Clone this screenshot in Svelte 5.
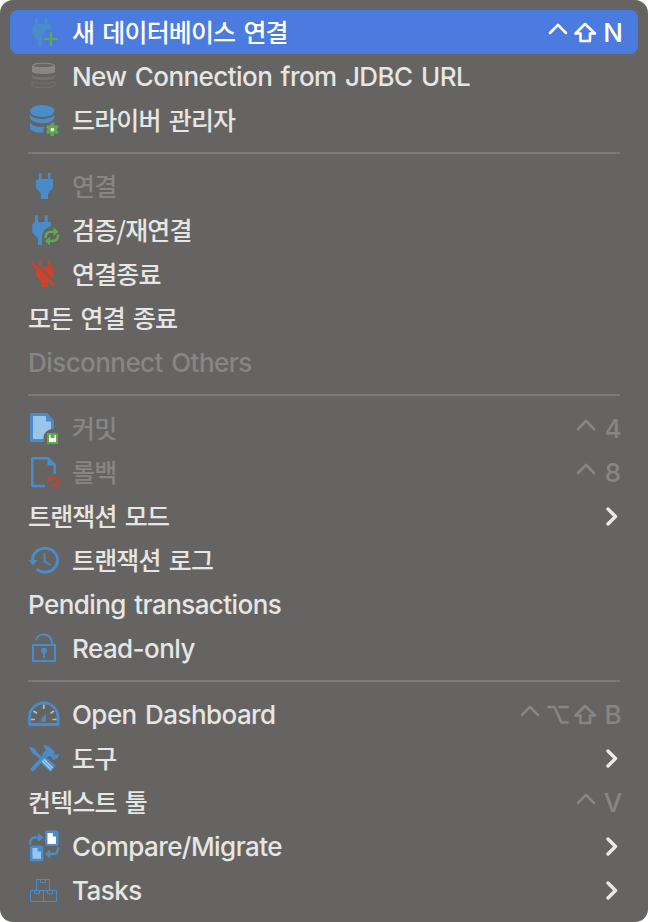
<script lang="ts">
  type Item = {
    label: string;
    icon?: string;
    keys?: string[];
    submenu?: boolean;
    disabled?: boolean;
    active?: boolean;
  };

  const groups: Item[][] = [
    [
      { label: "새 데이터베이스 연결", icon: "plug-add", keys: ["ctrl", "shift", "N"], active: true },
      { label: "New Connection from JDBC URL", icon: "jdbc" },
      { label: "드라이버 관리자", icon: "drivers" },
    ],
    [
      { label: "연결", icon: "plug", disabled: true },
      { label: "검증/재연결", icon: "reconnect" },
      { label: "연결종료", icon: "disconnect" },
      { label: "모든 연결 종료" },
      { label: "Disconnect Others", disabled: true },
    ],
    [
      { label: "커밋", icon: "commit", keys: ["ctrl", "4"], disabled: true },
      { label: "롤백", icon: "rollback", keys: ["ctrl", "8"], disabled: true },
      { label: "트랜잭션 모드", submenu: true },
      { label: "트랜잭션 로그", icon: "history" },
      { label: "Pending transactions" },
      { label: "Read-only", icon: "lock" },
    ],
    [
      { label: "Open Dashboard", icon: "dashboard", keys: ["ctrl", "alt", "shift", "B"] },
      { label: "도구", icon: "tools", submenu: true },
      { label: "컨텍스트 툴", keys: ["ctrl", "V"] },
      { label: "Compare/Migrate", icon: "compare", submenu: true },
      { label: "Tasks", icon: "tasks", submenu: true },
    ],
  ];

  const isKorean = (s: string) => /[가-힣]/.test(s);
</script>

{#snippet bigPlug()}
  <path d="M7 1.3h3V8h6.700V1.300h3V8H23v4.500c-5 1-8.500 4.500-9 10V31h-4v-6.500L4.300 18.500V10.500L7 8z" fill="#4a8cc8" />
{/snippet}

{#snippet glyph(name: string)}
  <svg class="icon" viewBox="0 0 32 32">
    {#if name === "plug-add"}
      {@render bigPlug()}
      <path d="M16 23h14M23 16v14" stroke="#62a84e" stroke-width="2" />
    {:else if name === "jdbc"}
      <path d="M4 6v5.500c0 3.300 23 3.300 23 0V6z" fill="#888786" />
      <ellipse cx="15.500" cy="5.500" rx="11" ry="2.300" fill="#686765" stroke="#929190" />
      <path d="M4 15v2.500c0 3.300 23 3.300 23 0V15c-2 3-21 3-23 0z" fill="#73726f" />
      <path d="M4 21.500c2 2.500 21 2.500 23 0V25c-1 3.700-22 3.700-23 0z" fill="none" stroke="#73726f" />
    {:else if name === "drivers"}
      <g fill="#4b8dca">
        <ellipse cx="14.200" cy="7" rx="12.200" ry="6" />
        <path d="M2 10.500c4 6 20.400 6 24.400 0V14c-3 7-21.400 7-24.400 0z" />
        <path d="M2 18.300c3 4.700 10 5.200 15 4.200-1.500 1.500-1.800 3-1.500 6C9 29.300 2 27.500 2 23.500z" />
        <path d="M21 20.500c3-1 4.500-2 5.400-3v1.500z" />
      </g>
      <circle cx="24.300" cy="25.500" r="5" fill="#62a84e" />
      <path d="M24.300 19v13M18.700 22.200l11.200 6.600M18.700 28.800l11.200-6.600" stroke="#62a84e" stroke-width="3.200" />
      <circle cx="24.300" cy="25.500" r="1.800" fill="#fff" />
    {:else if name === "plug"}
      <path d="M11 3h2.500v6H20V3h2.500v6H25v9l-5 5.500V29h-7v-5.500L8 18v-7.500L11 9z" fill="#4a8cca" />
    {:else if name === "reconnect"}
      {@render bigPlug()}
      <path d="M17.500 24c0-4.500 2.500-6.300 5.500-6.300h4M30 20.800c0 4.500-2.500 6.300-5.500 6.300h-4" fill="none" stroke="#62a84e" stroke-width="2.500" />
      <path d="M25.500 13.300l5 4.400-5 4.200zM22 22.800l-5 4.300 5 4.300z" fill="#62a84e" />
    {:else if name === "disconnect"}
      <path d="M11 3h2.500v6H20V3h2.500v6H25v9l-5 5.500V29h-7v-5.500L8 18v-7.500L11 9z" fill="#cb432b" />
      <path d="M5.500 3.500l24 23" stroke="#656461" stroke-width="1.500" />
      <path d="M3.500 5l23 23" stroke="#cb432b" stroke-width="2.600" />
    {:else if name === "commit"}
      <path d="M3.500 2.500h15l6 6.500v19.500h-21z" fill="#98c5e8" stroke="#4a8cca" stroke-width="3" stroke-linejoin="round" />
      <path d="M18 2v7.500h7.500z" fill="#4a8cca" />
      <circle cx="24.500" cy="26" r="9" fill="#656461" />
      <path d="M19 21h9.500l1.500 1.500V32H19z" fill="#62a84e" />
      <path d="M21 23h1.500v3h4v-3H28v7h-7z" fill="#fff" />
    {:else if name === "rollback"}
      <path d="M17 30H4.300V2.300H20l6.700 6.500V18" fill="none" stroke="#4a8cca" stroke-width="2.600" stroke-linejoin="round" />
      <path d="M19.500 1.500v8H27z" fill="#4a8cca" />
      <path d="M20 23h7c4.500 0 4.500 6.500 0 6.500h-5" fill="none" stroke="#c8432c" stroke-width="2" />
      <path d="M22 20l-4 3 4 3.500z" fill="#c8432c" />
    {:else if name === "history"}
      <path d="M4.500 16a12.500 12 0 1 1 4 9" fill="none" stroke="#4a8cca" stroke-width="3" />
      <path d="M16.500 9v8.500l6 3.500" fill="none" stroke="#4a8cca" stroke-width="1.900" />
      <path d="M.3 16h9.400L5 21z" fill="#4a8cca" />
    {:else if name === "lock"}
      <g fill="none" stroke="#4a8cca" stroke-width="2">
        <path d="M5 13h22v16H5zM8 8.500c1-4.500 4-6 7.500-6 5 0 8.500 3 8.500 10.500M16 19v7" />
      </g>
      <circle cx="16" cy="18.800" r="3" fill="#4a8cca" />
    {:else if name === "dashboard"}
      <path d="M1.500 26.500v-7.300a14 14 0 0 1 28.500 0v7.300z" fill="none" stroke="#4a8cca" stroke-width="2.800" stroke-linejoin="round" />
      <path d="M3 21.500h4M28.500 21.500h-4M5.500 13l3.500 2.200M26 13l-3.500 2.200M15.800 6.500v4.500" stroke="#98c5e8" stroke-width="1.700" />
      <path d="M18 15.500v6.300c0 3.300-5 2.500-4.700-.3.200-1.700 2.200-2.200 4.700-6z" fill="#4a8cca" />
    {:else if name === "tools"}
      <g stroke="#4a8cca">
        <path d="M3.500 28.500L20 10.500" stroke-width="4" />
        <path d="M5 9l8 7" stroke-width="3" />
        <path d="M15 17.500l10 9.500" stroke-width="8" stroke-linejoin="round" />
      </g>
      <path d="M1 4.500L4.500 5.500 8 8l1.500 3.500L7.500 13 4 11zM15 2.500l6 2 5 4.500.5 4 4.500-1.500-1 4.500-4.500 2-3-4-6 2-2.500-4.500 4-3z" fill="#4a8cca" />
      <path d="M15 18l9 9" stroke="#98c5e8" stroke-width="4" />
      <path d="M15.500 18.500l8.500 8.500" stroke="#4a8cca" stroke-width=".8" />
    {:else if name === "compare"}
      <rect x="17" y=".5" width="13.500" height="15.500" rx="2" fill="#4a8cca" />
      <path d="M19.500 3h5.300v3.500H28V14h-8.500z" fill="#fff" />
      <rect x="2" y="15.800" width="13.300" height="15.500" rx="1.500" fill="#4a8cca" />
      <path d="M4.500 18h5v3.500H13v7.300H4.500z" fill="#98c5e8" />
      <path d="M2.200 14.500C1.800 10 3.500 7.500 7 7.500h4M30.200 17.500C30.300 22 28 24 25 24h-4" fill="none" stroke="#4a8cca" stroke-width="2.400" />
      <path d="M10 3l5.500 4.500L10 12zM22 19.500L17 24l5 4.500z" fill="#4a8cca" />
    {:else if name === "tasks"}
      <path d="M2.500 16.500h26v11h-26zM15.500 16.500v11M8.500 16.500v-11h13v11M12.500 5.500v3h5v-3M6.500 16.500v3h5v-3M19.500 16.500v3h5v-3" fill="none" stroke="#4a8cca" />
    {/if}
  </svg>
{/snippet}

<div class="menu">
  {#each groups as group, i}
    {#if i > 0}
      <div class="separator"></div>
    {/if}
    {#each group as item}
      <div class="item" class:active={item.active} class:disabled={item.disabled}>
        {#if item.icon}
          {@render glyph(item.icon)}
        {/if}
        <span class="label" class:ko={isKorean(item.label)}>{item.label}</span>
        {#if item.keys}
          <span class="keys">
            {#each item.keys as key}
              <span class="key">
                {#if key === "ctrl"}
                  <svg viewBox="0 0 28 44"><path d="M6 23l8-8.200 8 8.200" /></svg>
                {:else if key === "alt"}
                  <svg viewBox="0 0 28 44"><path d="M4.500 15h6l7 15.500h6M15.500 15h8" /></svg>
                {:else if key === "shift"}
                  <svg viewBox="0 0 28 44"><path d="M13 14L3.500 23.500h5V31h9.500v-7.500h5z" /></svg>
                {:else}
                  {key}
                {/if}
              </span>
            {/each}
          </span>
        {:else if item.submenu}
          <svg class="arrow" viewBox="0 0 12 20"><path d="M2 3l7.500 7.500L2 18" /></svg>
        {/if}
      </div>
    {/each}
  {/each}
</div>

<style>
  :global(body) {
    margin: 0;
    background: #fff;
  }

  .menu {
    box-sizing: border-box;
    width: 648px;
    height: 922px;
    padding: 10px;
    border-radius: 13px;
    background: #656462;
    color: #e6e6e5;
    font-family: Inter, "Noto Sans CJK KR", sans-serif;
    font-size: 26px;
    font-weight: 500;
    cursor: default;
  }

  .item {
    display: flex;
    align-items: center;
    box-sizing: border-box;
    height: 44px;
    padding: 0 10px 0 18px;
    border-radius: 8px;
  }

  .active {
    background: #4c7be0;
    color: #fff;
  }

  .disabled,
  .keys {
    color: #878684;
  }

  .active .keys {
    color: #fff;
  }

  .separator {
    height: 2px;
    margin: 10px 18px;
    background: #7c7b79;
  }

  .icon {
    flex: none;
    width: 32px;
    height: 32px;
    margin-right: 12px;
  }

  .label {
    padding-top: 2px;
    line-height: 42px;
    white-space: pre;
    letter-spacing: -0.56px;
    word-spacing: 2px;
  }

  .label.ko {
    padding: 0 0 2px;
    font-family: "Noto Sans CJK KR", Inter, sans-serif;
    font-size: 25px;
    letter-spacing: -0.85px;
    word-spacing: 3.4px;
  }

  .keys {
    display: flex;
    margin-left: auto;
  }

  .key {
    box-sizing: border-box;
    width: 28px;
    height: 44px;
    padding-right: 2px;
    line-height: 45px;
    text-align: center;
  }

  .key svg {
    display: block;
    width: 28px;
    height: 44px;
    fill: none;
    stroke: currentColor;
    stroke-width: 2.6;
    stroke-linecap: round;
    stroke-linejoin: round;
  }

  .arrow {
    width: 12px;
    height: 20px;
    margin-left: auto;
    margin-right: 10px;
    fill: none;
    stroke: #e9e9e8;
    stroke-width: 3.4;
    stroke-linecap: round;
    stroke-linejoin: round;
  }
</style>
